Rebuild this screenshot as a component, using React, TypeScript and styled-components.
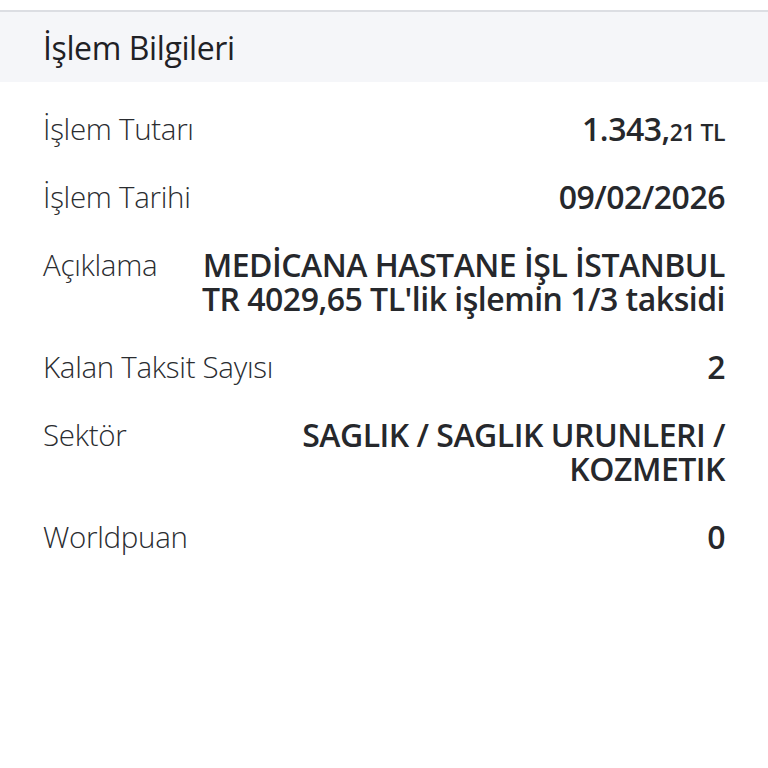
import React from "react";
import styled, { createGlobalStyle } from "styled-components";

const Global = createGlobalStyle`
  html, body { margin: 0; padding: 0; background: #ffffff; }
  body { font-family: "Open Sans", "Noto Sans", sans-serif; color: #222428; }
`;

const Page = styled.div`
  padding-top: 10px;
  width: 768px;
`;

const Header = styled.div`
  background: #f5f6f9;
  border-top: 2px solid #dcdee3;
  height: 70px;
  display: flex;
  align-items: center;
  padding: 0 43px;
  font-size: 32px;
  font-weight: 400;
  color: #1f2125;
  letter-spacing: -0.4px;
`;

const List = styled.div`
  display: flex;
  flex-direction: column;
  padding: 13px 43px 0 43px;
`;

const Row = styled.div`
  display: flex;
  justify-content: space-between;
  align-items: flex-start;
  gap: 40px;
  padding: 17px 0;
  line-height: 34px;
`;

const Label = styled.div`
  font-size: 29.5px;
  font-weight: 300;
  color: #2a2c30;
  white-space: nowrap;
  letter-spacing: -0.3px;
`;

const Value = styled.div`
  font-size: 32px;
  font-weight: 600;
  color: #26282c;
  text-align: right;
  letter-spacing: -0.5px;
`;

const Cents = styled.span`
  font-size: 23px;
  line-height: 0;
`;

export default function App() {
  return (
    <>
      <Global />
      <Page>
        <Header>İşlem Bilgileri</Header>
        <List>
          <Row>
            <Label>İşlem Tutarı</Label>
            <Value>
              1.343,<Cents>21 TL</Cents>
            </Value>
          </Row>
          <Row>
            <Label>İşlem Tarihi</Label>
            <Value>09/02/2026</Value>
          </Row>
          <Row>
            <Label>Açıklama</Label>
            <Value>
              MEDİCANA HASTANE İŞL İSTANBUL
              <br />
              TR 4029,65 TL'lik işlemin 1/3 taksidi
            </Value>
          </Row>
          <Row>
            <Label>Kalan Taksit Sayısı</Label>
            <Value>2</Value>
          </Row>
          <Row>
            <Label>Sektör</Label>
            <Value>
              SAGLIK / SAGLIK URUNLERI /
              <br />
              KOZMETIK
            </Value>
          </Row>
          <Row>
            <Label>Worldpuan</Label>
            <Value>0</Value>
          </Row>
        </List>
      </Page>
    </>
  );
}
